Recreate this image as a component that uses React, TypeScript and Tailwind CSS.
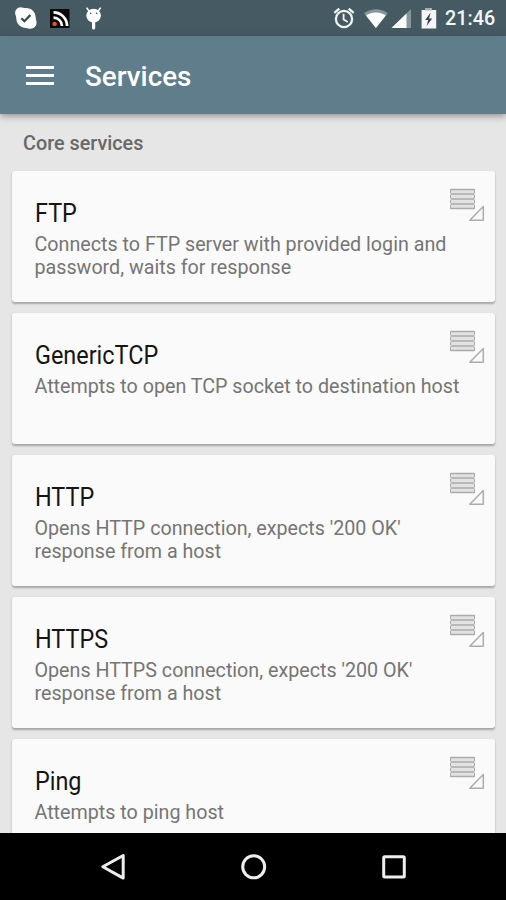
import * as React from "react"

const services = [
    { name: "FTP", description: ["Connects to FTP server with provided login and", "password, waits for response"] },
    { name: "GenericTCP", description: ["Attempts to open TCP socket to destination host"] },
    { name: "HTTP", description: ["Opens HTTP connection, expects '200 OK'", "response from a host"] },
    { name: "HTTPS", description: ["Opens HTTPS connection, expects '200 OK'", "response from a host"] },
    { name: "Ping", description: ["Attempts to ping host"] },
]

function NotificationIcons() {
    return (
        <svg width="96" height="36" viewBox="0 0 96 36" fill="none">
            {/* skype */}
            <path
                d="M12.5 7.2c2 0 3 .9 5.5.9 5.600 0 9.700 4.200 9.700 9.700 0 2 .9 3 .9 4.900a6 6 0 0 1-6 6c-2 0-3-.8-4.800-.8-5.400 0-9.500-4.200-9.500-9.600 0-2-1.200-3.200-1.200-5.200a5.800 5.800 0 0 1 5.400-5.900z"
                fill="#fff"
            />
            <path d="M13.4 18.2l3 3 6-6.2" stroke="#37474f" strokeWidth="2.3" />
            {/* rss */}
            <rect x="42" y="9" width="19.5" height="19" fill="#0a0a0a" />
            <circle cx="46.6" cy="23.9" r="2.2" fill="#f4511e" />
            <path d="M45.500 17.600a8.500 8.500 0 0 1 8.500 8.500M45.500 12.400a13.600 13.600 0 0 1 13.600 13.600" stroke="#fff" strokeWidth="2.7" />
            {/* debug bug */}
            <ellipse cx="85.6" cy="15.6" rx="7.3" ry="6.8" fill="#fff" />
            <path d="M81 11l-2-2.8M90.2 11l2-2.8" stroke="#fff" strokeWidth="1.6" strokeLinecap="round" />
            <path d="M85.6 21v7" stroke="#fff" strokeWidth="3.2" strokeLinecap="round" />
            <circle cx="82.6" cy="13.4" r="0.8" fill="#455a64" />
            <circle cx="88.6" cy="13.4" r="0.8" fill="#455a64" />
        </svg>
    )
}

function SystemIcons() {
    return (
        <svg width="108" height="36" viewBox="0 0 108 36" fill="none">
            {/* alarm */}
            <circle cx="13" cy="19" r="8.1" stroke="#f1f4f5" strokeWidth="2.3" />
            <path d="M12.6 13.8v5.6l4.1 2.7" stroke="#f1f4f5" strokeWidth="1.8" />
            <path d="M3.3 12.8l5-4.2M22.7 12.8l-5-4.2" stroke="#f1f4f5" strokeWidth="2.3" />
            {/* wifi */}
            <path d="M44.9 28L33 13.2c6.8-5.3 17-5.3 23.8 0z" fill="#87959c" />
            <path d="M44.9 28L35 15.6c5.8-4.3 14-4.3 19.8 0z" fill="#fff" />
            {/* cell signal */}
            <path d="M80 9v19H60.5z" fill="#87959c" />
            <path d="M75.5 13.4V28h-15z" fill="#fff" />
            {/* battery */}
            <path d="M94 8h7v2h4.200v18.500H90.600V10H94z" fill="#f4f6f7" />
            <path d="M94 8h7v2.4h-7z" fill="#a3afb4" />
            <path d="M99.6 12.6l-5.4 7.3h3L95.6 26l5.6-7.5h-3.1z" fill="#37474f" />
        </svg>
    )
}

function StatusBar() {
    return (
        <div className="flex h-9 items-center justify-between bg-[#455a62] pl-2 pr-[10px]">
            <NotificationIcons />
            <div className="flex items-center">
                <SystemIcons />
                <span className="ml-[6px] w-[51px] whitespace-nowrap pt-[2px] text-[19.8px] font-medium leading-6 text-[#f4f6f7]">
                    21:46
                </span>
            </div>
        </div>
    )
}

function AppBar() {
    return (
        <div className="z-10 flex h-[78px] shrink-0 items-center bg-[#607d8b] pl-[26px] shadow-[0_2px_7px_rgba(60,50,65,0.5)]">
            <div className="flex w-7 flex-col gap-[5px]">
                <div className="h-[3px] bg-white" />
                <div className="h-[3px] bg-white" />
                <div className="h-[3px] bg-white" />
            </div>
            <h1 className="ml-[31px] pt-1 text-[27.8px] font-medium leading-8 text-white">Services</h1>
        </div>
    )
}

function DragIcon() {
    return (
        <svg width="36" height="34" viewBox="0 0 36 34" fill="none" stroke="#acacac">
            <path d="M1.5 1.5h24v19h-24z" fill="#e2e2e2" stroke="none" />
            <path d="M1.5 1.5h24M1.5 6h24M1.5 11h24M1.5 16h24M1.5 20.5h24" strokeWidth="1.3" />
            <path d="M1.5 1v4M25.5 1v4M1.5 7v3M25.5 7v3M1.5 12v3M25.5 12v3M1.5 17v4M25.5 17v4" />
            <path d="M34.3 18.5v13.7H20.8z" strokeWidth="1.5" strokeLinejoin="round" />
        </svg>
    )
}

function ServiceCard({ name, description }: { name: string; description: string[] }) {
    return (
        <div className="flex h-[131px] shrink-0 justify-between rounded-[3px] bg-[#fafafa] pl-[22.5px] pr-[10px] shadow-[0_1.5px_2px_rgba(0,0,0,0.28)]">
            <div className="pt-[26px]">
                <h2 className="origin-left scale-x-[0.9] whitespace-nowrap text-[26px] leading-8 text-[#151515]">{name}</h2>
                <div className="pt-[4px] text-[19.7px] leading-[23px] text-[#757575]">
                    {description.map((line) => (
                        <p key={line} className="whitespace-nowrap">{line}</p>
                    ))}
                </div>
            </div>
            <div className="w-0 pt-[17px]">
                <div className="-ml-9">
                    <DragIcon />
                </div>
            </div>
        </div>
    )
}

function NavigationBar() {
    return (
        <div className="z-10 flex h-[67px] shrink-0 items-center bg-black pl-[98px]">
            <svg width="312" height="67" viewBox="0 0 312 67" fill="none" stroke="#eeeeee" strokeWidth="3">
                <path d="M25.2 22.5v22.6L4.8 33.8z" strokeLinejoin="round" />
                <circle cx="155.7" cy="33.8" r="11" />
                <rect x="285.7" y="23.7" width="20.6" height="20.4" rx="1" />
            </svg>
        </div>
    )
}

export default function App() {
    return (
        <div className="flex h-[900px] w-[506px] flex-col overflow-hidden bg-[#e6e6e6] font-['Roboto',sans-serif]">
            <StatusBar />
            <AppBar />
            <main className="min-h-0 flex-1 overflow-hidden pl-3 pr-[11px]">
                <h3 className="h-[57px] pl-[11px] pt-[18px] text-[19.8px] font-medium leading-6 text-[#686868]">
                    Core services
                </h3>
                <div className="flex flex-col gap-[11px]">
                    {services.map((service) => (
                        <ServiceCard key={service.name} {...service} />
                    ))}
                </div>
            </main>
            <NavigationBar />
        </div>
    )
}
